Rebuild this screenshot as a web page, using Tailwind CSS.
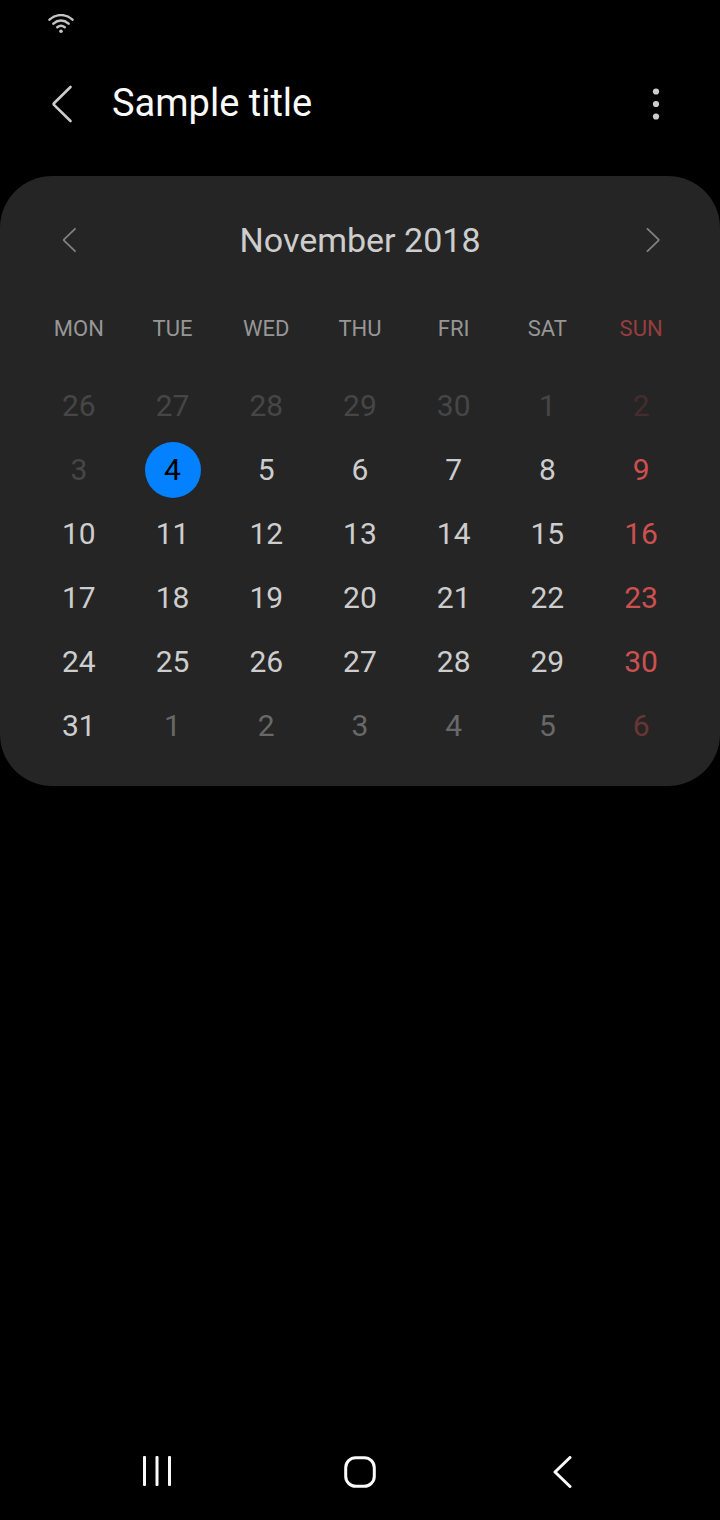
<!DOCTYPE html>
<html lang="en">
<head>
<meta charset="utf-8">
<meta name="viewport" content="width=device-width, initial-scale=1">
<title>Sample title</title>
<script src="https://cdn.jsdelivr.net/npm/@tailwindcss/browser@4"></script>
</head>
<body class="bg-black font-['Roboto',sans-serif] text-[#cdcdcd]">
<div class="flex min-h-screen flex-col">
  <div class="flex h-12 items-center px-12">
    <svg class="h-5 w-[26px]" viewBox="0 0 26 20" fill="none" stroke="#c4c4c4" stroke-width="2.5" stroke-linecap="round" role="img" aria-label="Wi-Fi">
      <path d="M1.5 5.6C8.5-.4 17.500-.4 24.500 5.600M5.400 9.600C10 5.600 16 5.600 20.600 9.600M9.300 13.300C11.500 11.500 14.500 11.500 16.700 13.300"/>
      <circle cx="13" cy="17.200" r="1.800" fill="#c4c4c4" stroke="none"/>
    </svg>
  </div>

  <header class="flex h-28 items-center px-9">
    <button type="button" aria-label="Navigate up" class="flex h-12 w-[52px] items-center justify-center">
      <svg class="h-10 w-6" viewBox="0 0 24 40" fill="none" stroke="#cdcdcd" stroke-width="2.600" stroke-linecap="round" stroke-linejoin="round"><path d="M20.500 3L4 19.200Q3.200 20 4 20.800L20.500 37"/></svg>
    </button>
    <h1 class="ml-6 flex-1 pb-0.5 text-[38px] leading-[46px] text-[#fafafa]">Sample title</h1>
    <button type="button" aria-label="More options" class="flex h-12 w-14 items-center justify-center">
      <svg class="h-8 w-2" viewBox="0 0 8 32" fill="#cdcdcd"><circle cx="4" cy="3.500" r="3.100"/><circle cx="4" cy="16" r="3.100"/><circle cx="4" cy="28.500" r="3.100"/></svg>
    </button>
  </header>

  <main class="mt-4 rounded-[52px] bg-[#252525] px-8 pb-7">
    <div class="flex h-32 items-center justify-between px-3">
      <button type="button" aria-label="Previous month" class="flex size-12 items-center justify-center">
        <svg class="h-7 w-4" viewBox="0 0 16 28" fill="none" stroke="#808080" stroke-width="1.800" stroke-linecap="round" stroke-linejoin="round"><path d="M15 2.800L4.100 13.400Q3.500 14 4.100 14.600L15 25.200"/></svg>
      </button>
      <h2 class="text-[34px] leading-10">November 2018</h2>
      <button type="button" aria-label="Next month" class="flex size-12 items-center justify-center">
        <svg class="h-7 w-4" viewBox="0 0 16 28" fill="none" stroke="#808080" stroke-width="1.800" stroke-linecap="round" stroke-linejoin="round"><path d="M3.500 2.800L14.400 13.400Q15 14 14.400 14.600L3.500 25.200"/></svg>
      </button>
    </div>
    <table class="w-full table-fixed text-center text-[30px] leading-9" aria-label="November 2018">
      <thead class="text-[22px] leading-[50px] text-[#969696]">
        <tr>
          <th scope="col" class="pb-5 font-normal">MON</th><th scope="col" class="pb-5 font-normal">TUE</th><th scope="col" class="pb-5 font-normal">WED</th><th scope="col" class="pb-5 font-normal">THU</th><th scope="col" class="pb-5 font-normal">FRI</th><th scope="col" class="pb-5 font-normal">SAT</th><th scope="col" class="pb-5 font-normal text-[#963e3e]">SUN</th>
        </tr>
      </thead>
      <tbody>
        <tr class="h-16 text-[#464646]">
          <td>26</td><td>27</td><td>28</td><td>29</td><td>30</td><td>1</td><td class="text-[#462d2d]">2</td>
        </tr>
        <tr class="h-16">
          <td class="text-[#464646]">3</td><td><button type="button" aria-pressed="true" class="mx-auto flex size-14 items-center justify-center rounded-full bg-[#0381fe] text-black">4</button></td><td>5</td><td>6</td><td>7</td><td>8</td><td class="text-[#cd5050]">9</td>
        </tr>
        <tr class="h-16">
          <td>10</td><td>11</td><td>12</td><td>13</td><td>14</td><td>15</td><td class="text-[#cd5050]">16</td>
        </tr>
        <tr class="h-16">
          <td>17</td><td>18</td><td>19</td><td>20</td><td>21</td><td>22</td><td class="text-[#cd5050]">23</td>
        </tr>
        <tr class="h-16">
          <td>24</td><td>25</td><td>26</td><td>27</td><td>28</td><td>29</td><td class="text-[#cd5050]">30</td>
        </tr>
        <tr class="h-16 text-[#686868]">
          <td class="text-[#cdcdcd]">31</td><td>1</td><td>2</td><td>3</td><td>4</td><td>5</td><td class="text-[#683636]">6</td>
        </tr>
      </tbody>
    </table>
  </main>

  <nav class="mt-auto flex h-24 items-center justify-between px-32" aria-label="System navigation">
    <button type="button" aria-label="Recent apps" class="flex size-14 items-center justify-center">
      <svg class="size-8" viewBox="0 0 32 32" fill="#fafafa"><rect x="3" y="0" width="3" height="30" rx="1"/><rect x="15.500" y="0" width="3" height="30" rx="1"/><rect x="28" y="0" width="3" height="30" rx="1"/></svg>
    </button>
    <button type="button" aria-label="Home" class="flex size-14 items-center justify-center">
      <svg class="size-8" viewBox="0 0 32 32" fill="none" stroke="#fafafa" stroke-width="3"><rect x="1.700" y="1.700" width="28.600" height="28.600" rx="10"/></svg>
    </button>
    <button type="button" aria-label="Back" class="flex size-14 items-center justify-center">
      <svg class="size-8" viewBox="0 0 32 32" fill="none" stroke="#fafafa" stroke-width="3" stroke-linecap="round" stroke-linejoin="round"><path d="M22 1.500L7 16L22 30.500"/></svg>
    </button>
  </nav>
</div>
</body>
</html>
